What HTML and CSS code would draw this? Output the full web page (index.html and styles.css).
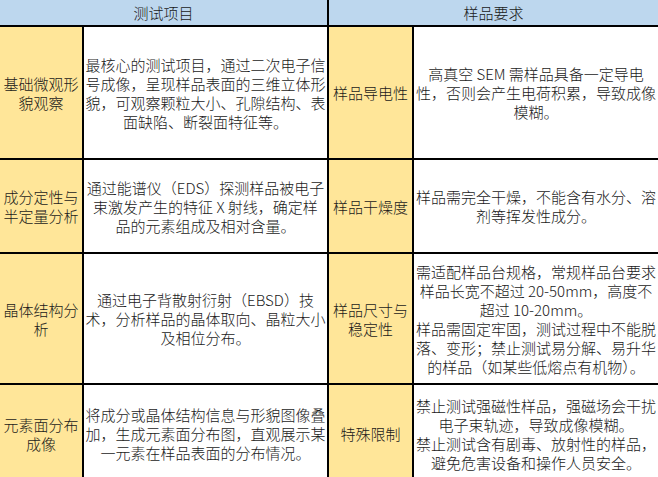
FILE: index.html
```html
<!DOCTYPE html>
<html lang="zh-CN">
<head>
<meta charset="utf-8">
<title>SEM 测试项目与样品要求</title>
<link rel="stylesheet" href="styles.css">
</head>
<body>
<div class="sheet">
  <div class="hd span2">测试项目</div>
  <div class="hd span2">样品要求</div>

  <div class="key">基础微观形<br>貌观察</div>
  <div class="desc">最核心的测试项目，通过二次电子信<br>号成像，呈现样品表面的三维立体形<br>貌，可观察颗粒大小、孔隙结构、表<br>面缺陷、断裂面特征等。</div>
  <div class="key">样品导电性</div>
  <div class="desc">高真空 SEM 需样品具备一定导电<br>性，否则会产生电荷积累，导致成像<br>模糊。</div>

  <div class="key">成分定性与<br>半定量分析</div>
  <div class="desc">通过能谱仪（EDS）探测样品被电子<br>束激发产生的特征 X 射线，确定样<br>品的元素组成及相对含量。</div>
  <div class="key">样品干燥度</div>
  <div class="desc">样品需完全干燥，不能含有水分、溶<br>剂等挥发性成分。</div>

  <div class="key">晶体结构分<br>析</div>
  <div class="desc">通过电子背散射衍射（EBSD）技<br>术，分析样品的晶体取向、晶粒大小<br>及相位分布。</div>
  <div class="key">样品尺寸与<br>稳定性</div>
  <div class="desc">需适配样品台规格，常规样品台要求<br>样品长宽不超过 20-50mm，高度不<br>超过 10-20mm。<br>样品需固定牢固，测试过程中不能脱<br>落、变形；禁止测试易分解、易升华<br>的样品（如某些低熔点有机物）。</div>

  <div class="key">元素面分布<br>成像</div>
  <div class="desc">将成分或晶体结构信息与形貌图像叠<br>加，生成元素面分布图，直观展示某<br>一元素在样品表面的分布情况。</div>
  <div class="key">特殊限制</div>
  <div class="desc">禁止测试强磁性样品，强磁场会干扰<br>电子束轨迹，导致成像模糊。<br>禁止测试含有剧毒、放射性的样品，<br>避免危害设备和操作人员安全。</div>
</div>
</body>
</html>
```
FILE: styles.css
```css
html, body {
  margin: 0;
  padding: 0;
  background: #ffffff;
  overflow: hidden;
}

.sheet {
  display: grid;
  grid-template-columns: 82px 243px 83px 244px;
  grid-template-rows: 25px 131px 92px 129px 97px;
  gap: 2px;
  background: #000000;
  width: 658px;
  font-family: "Noto Sans CJK SC", "Noto Sans", sans-serif;
  font-size: 15px;
  font-weight: 300;
  line-height: 19px;
  color: #1a1a1a;
}

.sheet > div {
  display: flex;
  align-items: center;
  justify-content: center;
  text-align: center;
  white-space: nowrap;
}

.span2 {
  grid-column: span 2;
}

.hd {
  background: #bdd7ee;
}

.key {
  background: #ffe699;
}

.desc {
  background: #ffffff;
}
```
